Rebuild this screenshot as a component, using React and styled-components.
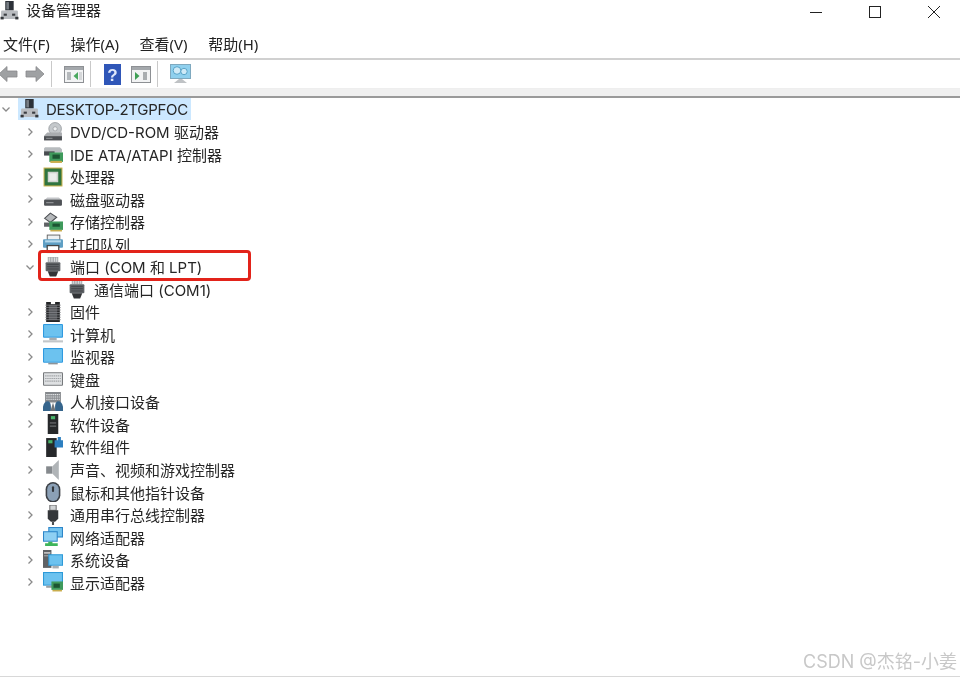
import React from 'react'
import styled, { createGlobalStyle } from 'styled-components'

const GlobalStyle = createGlobalStyle`
  html, body { margin: 0; padding: 0; background: #fff; }
  body { font-family: Inter, "Noto Sans CJK SC", sans-serif; color: #1a1a1a; }
`

const Icons = {
  app: (
    <>
      <rect x="5" y="0" width="8" height="9" fill="#2c3138" />
      <rect x="6" y="1" width="2.5" height="7" fill="#777d84" />
      <rect x="1" y="9" width="16" height="8" rx="1" fill="#b9bcc0" />
      <rect x="0.5" y="15" width="3" height="2.5" fill="#33363a" />
      <rect x="14.5" y="15" width="3" height="2.5" fill="#33363a" />
      <rect x="3.5" y="12" width="3" height="2" fill="#3a3d41" />
      <rect x="11.5" y="12" width="3" height="2" fill="#3a3d41" />
    </>
  ),
  dvd: (
    <>
      <circle cx="11.5" cy="6.5" r="6" fill="#c4c8cb" stroke="#8f9397" strokeWidth=".7" />
      <circle cx="11.5" cy="6.5" r="2" fill="#eef0f1" stroke="#8f9397" strokeWidth=".6" />
      <path d="M1 13 L4 10 H18 V17 H1 Z" fill="#a9acaf" />
      <rect x="1" y="13.5" width="17" height="4" fill="#4c4f53" />
      <rect x="3" y="15" width="6" height="1" fill="#8f9295" />
    </>
  ),
  ide: (
    <>
      <path d="M2 3 H16 L18 5 V8 H1 V4 Z" fill="#b7bbbe" />
      <rect x="1" y="7" width="10" height="4" fill="#484c50" />
      <rect x="6" y="8" width="13" height="9" fill="#3f9a5c" />
      <rect x="9" y="10" width="7" height="4" fill="#1c5532" />
      <rect x="7" y="16" width="11" height="2" fill="#c9ad4d" />
    </>
  ),
  cpu: (
    <>
      <rect x=".5" y=".5" width="18" height="18" fill="#c7b24d" />
      <rect x="1.5" y="1.5" width="16" height="16" fill="#2f7440" />
      <rect x="4.5" y="4.5" width="10" height="10" fill="#cfd3cf" />
      <rect x="6" y="6" width="7" height="7" fill="#eceeec" />
    </>
  ),
  disk: (
    <>
      <path d="M2 10 L4 8 H15 L17.5 10 Z" fill="#c4c6c9" />
      <rect x="1" y="10" width="17" height="6" rx="1" fill="#4f5256" />
      <rect x="3" y="12.5" width="7" height="1" fill="#9a9da0" />
    </>
  ),
  storage: (
    <>
      <path d="M1.5 6 L7 1 L13 5 L7 10 Z" fill="#b5b8bb" stroke="#4c4f53" strokeWidth="1" />
      <rect x="1" y="10" width="9" height="4" fill="#5f6265" />
      <rect x="6" y="9" width="13" height="8" fill="#3f9a5c" />
      <rect x="9" y="11" width="7" height="3" fill="#1c5532" />
      <rect x="7" y="17" width="11" height="1.5" fill="#c9ad4d" />
    </>
  ),
  printer: (
    <>
      <rect x="4" y="1" width="12" height="6" fill="#eef1f3" stroke="#555" strokeWidth=".8" />
      <rect x="0" y="5" width="19" height="8" rx="1" fill="#5f9fc4" />
      <rect x="2" y="6" width="15" height="2" fill="#b6d9ec" />
      <rect x="4" y="11" width="11" height="6.5" fill="#fff" stroke="#444" strokeWidth="1.2" />
    </>
  ),
  port: (
    <>
      <rect x="4.5" y="0" width="10" height="5" fill="#a7abaf" />
      <path d="M6 .5 V4.5 M8.5 .5 V4.5 M11 .5 V4.5 M13 .5 V4.5" stroke="#e8eaec" strokeWidth=".8" />
      <rect x="2.5" y="5" width="14" height="8.5" rx="1" fill="#5f6367" />
      <path d="M4 7 H15 M4 9.2 H15 M4 11.4 H15" stroke="#3f4245" strokeWidth=".8" />
      <path d="M4.5 13.5 H14.5 L12.5 18.5 H6.5 Z" fill="#313336" />
    </>
  ),
  firmware: (
    <>
      <rect x="3" y="0" width="13" height="19" fill="#232426" />
      <rect x="7.5" y="0" width="4" height="2" fill="#fff" />
      <rect x="5.5" y="3" width="8" height="14" fill="#54565a" />
      <path d="M2 3 H17 M2 5.3 H17 M2 7.6 H17 M2 9.9 H17 M2 12.2 H17 M2 14.5 H17 M2 16.8 H17" stroke="#8b8d90" strokeWidth=".7" />
    </>
  ),
  computer: (
    <>
      <rect x="0" y="0" width="19" height="13" rx="1" fill="#2f9ae0" />
      <rect x="1" y="1" width="17" height="11" fill="#6cc2ef" />
      <rect x="6" y="13" width="7" height="2.5" fill="#a8adb1" />
      <rect x="0" y="15.5" width="19" height="2" fill="#c2c6c9" />
    </>
  ),
  monitor: (
    <>
      <rect x="0" y="1" width="19" height="14" rx="1" fill="#2f9ae0" />
      <rect x="1" y="2" width="17" height="12" fill="#6cc2ef" />
      <rect x="5" y="15" width="9" height="1.5" fill="#8d9397" />
    </>
  ),
  keyboard: (
    <>
      <rect x="0" y="3" width="19" height="13" rx="1" fill="#75787b" />
      <rect x="1" y="4" width="17" height="11" fill="#dfe1e3" />
      <path d="M2 6.5 H17 M2 9 H17 M2 11.5 H17" stroke="#a2a5a8" strokeWidth="1.1" strokeDasharray="1.4 .6" />
    </>
  ),
  hid: (
    <>
      <rect x="2" y="0" width="15" height="10" fill="#85888c" />
      <path d="M3 2.5 H16 M3 4.7 H16 M3 6.9 H16" stroke="#e3e5e7" strokeWidth="1" strokeDasharray="1.4 .6" />
      <path d="M0 18 C-1 11 3 8 5.5 9 C8 10 7.5 15 7.5 18 Z" fill="#36658c" />
      <path d="M19 18 C20 11 16 8 13.5 9 C11 10 11.5 15 11.5 18 Z" fill="#36658c" />
      <path d="M7 18 L9.5 10 L12 18" fill="#70757a" />
    </>
  ),
  softdev: (
    <>
      <rect x="4.5" y="0" width="10" height="19" fill="#26282a" />
      <rect x="7.5" y="2" width="4" height="3" fill="#49b36a" />
      <rect x="6.5" y="8" width="6" height="1" fill="#77797c" />
      <rect x="6.5" y="11" width="6" height="1" fill="#77797c" />
    </>
  ),
  softcomp: (
    <>
      <rect x="3" y="1" width="10" height="18" fill="#26282a" />
      <rect x="5" y="3" width="4" height="3" fill="#49b36a" />
      <path d="M11 3 H14 V0 H17 V3 H19.5 V10 H11 Z" fill="#2d7fc0" />
    </>
  ),
  sound: (
    <>
      <rect x="3" y="6" width="6" height="7" fill="#85898d" />
      <path d="M9 6 L15 0 V19 L9 13 Z" fill="#b0b4b7" />
    </>
  ),
  mouse: (
    <>
      <rect x="2.5" y="0" width="14" height="19.5" rx="7" fill="#3c4046" />
      <rect x="4" y="1.5" width="11" height="16.5" rx="5.5" fill="#8ba0b6" />
      <rect x="8.5" y="4" width="2" height="5.5" rx="1" fill="#33373c" />
    </>
  ),
  usb: (
    <>
      <rect x="6.5" y="0" width="6" height="5" fill="#d0d3d5" stroke="#555" strokeWidth=".8" />
      <path d="M4.5 5 H14.5 V13 L11.5 16 H7.5 L4.5 13 Z" fill="#34373a" />
      <rect x="8.5" y="16" width="2" height="3" fill="#4c4f52" />
    </>
  ),
  network: (
    <>
      <rect x="5" y="0" width="14" height="10" fill="#2d86c9" />
      <rect x="6" y="1" width="12" height="8" fill="#74c4ef" />
      <rect x="0" y="4" width="14" height="10" fill="#2d86c9" />
      <rect x="1" y="5" width="12" height="8" fill="#8ed0f3" />
      <path d="M5 14 H9 V15.5 H14 V18 H2 V15.5 H5 Z" fill="#3eb45a" />
    </>
  ),
  system: (
    <>
      <rect x="0" y="0" width="8" height="17" fill="#5f6265" />
      <rect x="1" y="2" width="6" height="1.5" fill="#c8cacc" />
      <rect x="1" y="5" width="6" height="1" fill="#a8aaac" />
      <rect x="5" y="4" width="14" height="11" fill="#2d9ad8" />
      <rect x="6" y="5" width="12" height="9" fill="#6cc2ef" />
      <rect x="9" y="15" width="6" height="2.5" fill="#a8adb1" />
    </>
  ),
  display: (
    <>
      <rect x="0" y="0" width="19" height="13" fill="#2d9ad8" />
      <rect x="1" y="1" width="17" height="11" fill="#6cc2ef" />
      <rect x="3" y="13" width="8" height="2" fill="#9aa0a4" />
      <rect x="8" y="9" width="11" height="8" fill="#3f9a5c" />
      <rect x="10" y="11" width="6" height="4" fill="#1c5532" />
      <rect x="9" y="17" width="9" height="1.5" fill="#c9ad4d" />
    </>
  ),
}

const rows = [
  ['dvd', 'DVD/CD-ROM 驱动器'],
  ['ide', 'IDE ATA/ATAPI 控制器'],
  ['cpu', '处理器'],
  ['disk', '磁盘驱动器'],
  ['storage', '存储控制器'],
  ['printer', '打印队列'],
  ['port', '端口 (COM 和 LPT)', true],
  ['port', '通信端口 (COM1)', false, true],
  ['firmware', '固件'],
  ['computer', '计算机'],
  ['monitor', '监视器'],
  ['keyboard', '键盘'],
  ['hid', '人机接口设备'],
  ['softdev', '软件设备'],
  ['softcomp', '软件组件'],
  ['sound', '声音、视频和游戏控制器'],
  ['mouse', '鼠标和其他指针设备'],
  ['usb', '通用串行总线控制器'],
  ['network', '网络适配器'],
  ['system', '系统设备'],
  ['display', '显示适配器'],
]

function Icon({ name }) {
  return <IconSvg viewBox="0 0 19 19">{Icons[name]}</IconSvg>
}

function Chevron({ open, root }) {
  return (
    <ChevronBox viewBox="0 0 10 10" $root={root}>
      <path d={open ? 'M1.5 3.5 L5 7 L8.5 3.5' : 'M3.5 1.5 L7 5 L3.5 8.5'} fill="none" stroke="#8a8a8a" strokeWidth="1.3" />
    </ChevronBox>
  )
}

function WindowIcon({ arrow }) {
  return (
    <svg width="20" height="17" viewBox="0 0 20 17">
      <rect x=".5" y=".5" width="19" height="16" fill="#f2f3f4" stroke="#8d9094" />
      <rect x="1" y="1" width="18" height="3" fill="#a4a8ac" />
      {arrow === 'left' ? (
        <>
          <rect x="3" y="6" width="4" height="8" fill="#b5b9bc" />
          <path d="M14 6 L9.5 10 L14 14 Z" fill="#4aa85f" />
          <rect x="15" y="6" width="3" height="8" fill="#d5d7d9" />
        </>
      ) : (
        <>
          <path d="M4 6 L8.5 10 L4 14 Z" fill="#3f9f55" />
          <rect x="12" y="6" width="4" height="8" fill="#a9adb0" />
        </>
      )}
    </svg>
  )
}

export default function App() {
  return (
    <Page>
      <GlobalStyle />
      <TitleBar>
        <TitleIcon><Icon name="app" /></TitleIcon>
        <Title>设备管理器</Title>
        <WinButtons>
          <svg width="14" height="14" viewBox="0 0 14 14"><path d="M1 7.5 H13" stroke="#222" strokeWidth="1" /></svg>
          <svg width="14" height="14" viewBox="0 0 14 14"><rect x="1.5" y="1.5" width="11" height="11" fill="none" stroke="#222" strokeWidth="1" /></svg>
          <svg width="14" height="14" viewBox="0 0 14 14"><path d="M1 1 L13 13 M13 1 L1 13" stroke="#222" strokeWidth="1" /></svg>
        </WinButtons>
      </TitleBar>
      <MenuBar>
        <MenuItem>文件(F)</MenuItem>
        <MenuItem>操作(A)</MenuItem>
        <MenuItem>查看(V)</MenuItem>
        <MenuItem>帮助(H)</MenuItem>
      </MenuBar>
      <ToolBar>
        <ToolIcon $w={16}>
          <svg width="20" height="20" viewBox="0 0 20 20" style={{ flex: 'none' }}><path d="M1 10 L9 2.5 V7 H19 V13 H9 V17.5 Z" fill="#9fa1a3" stroke="#88898b" strokeWidth=".8" /></svg>
        </ToolIcon>
        <ToolIcon $w={20} $ml={9}>
          <svg width="20" height="20" viewBox="0 0 20 20"><path d="M19 10 L11 2.5 V7 H1 V13 H11 V17.5 Z" fill="#9fa1a3" stroke="#88898b" strokeWidth=".8" /></svg>
        </ToolIcon>
        <ToolSep />
        <ToolIcon $w={20} $ml={12}><WindowIcon arrow="left" /></ToolIcon>
        <ToolSep />
        <ToolIcon $w={17} $ml={13}>
          <svg width="17" height="21" viewBox="0 0 17 21">
            <rect width="17" height="21" fill="#2f56b8" />
            <text x="8.5" y="17" textAnchor="middle" fontSize="17" fontWeight="700" fontFamily="Liberation Sans" fill="#dfe8fb">?</text>
          </svg>
        </ToolIcon>
        <ToolIcon $w={20} $ml={10}><WindowIcon arrow="right" /></ToolIcon>
        <ToolSep />
        <ToolIcon $w={21} $ml={12}>
          <svg width="21" height="20" viewBox="0 0 21 20">
            <rect x=".5" y=".5" width="20" height="14" fill="#8fd0ee" stroke="#7fa9bf" />
            <circle cx="7" cy="6.5" r="3.8" fill="#cfeaf7" stroke="#5aa5c9" />
            <circle cx="14" cy="7.5" r="3.2" fill="#cfeaf7" stroke="#5aa5c9" />
            <path d="M9 15 L4 19 H17 L12 15 Z" fill="#bfc2c5" />
          </svg>
        </ToolIcon>
      </ToolBar>
      <Divider />
      <Tree>
        <Row $root>
          <Chevron open root />
          <RootLabel>
            <Icon name="app" />
            <RootText>DESKTOP-2TGPFOC</RootText>
          </RootLabel>
        </Row>
        {rows.map(([icon, label, open, child], i) => (
          <Row key={i} $child={child}>
            {child ? null : <Chevron open={open} />}
            <Icon name={icon} />
            <Label>{label}</Label>
          </Row>
        ))}
        <RedBox />
      </Tree>
      <Watermark>CSDN @杰铭-小姜</Watermark>
      <BottomLine />
    </Page>
  )
}

const Page = styled.div`
  position: relative;
  width: 960px;
  height: 679px;
  overflow: hidden;
  background: #fff;
  filter: blur(0.35px);
`

const TitleBar = styled.div`
  display: flex;
  align-items: center;
  height: 22px;
`

const TitleIcon = styled.div`
  display: flex;
  width: 26px;
`

const Title = styled.div`
  font-size: 15px;
  line-height: 24px;
  color: #222;
`

const WinButtons = styled.div`
  margin-left: auto;
  display: flex;
  align-items: center;
  gap: 45px;
  padding: 1px 19px 0 0;
`

const MenuBar = styled.div`
  display: flex;
  align-items: center;
  gap: 20.6px;
  height: 38px;
  padding: 7px 0 0 3px;
  box-sizing: border-box;
  border-bottom: 2px solid #d0d0d0;
  font-family: "Noto Sans", "Noto Sans CJK SC", sans-serif;
`

const MenuItem = styled.div`
  font-size: 15px;
  color: #222;
`

const ToolBar = styled.div`
  display: flex;
  align-items: center;
  height: 28px;
  border-bottom: 1px solid #eee;
`

const ToolIcon = styled.div`
  display: flex;
  align-items: center;
  justify-content: center;
  width: ${(p) => p.$w}px;
  margin-left: ${(p) => p.$ml || 0}px;
`

const ToolSep = styled.div`
  width: 1px;
  height: 26px;
  margin-left: 6px;
  background: #c9c9c9;
`

const Divider = styled.div`
  height: 7px;
  background: #f0f0f0;
  border-bottom: 2px solid #9a9a9a;
`

const Tree = styled.div`
  position: relative;
`

const Row = styled.div`
  display: flex;
  align-items: center;
  height: 22.52px;
  padding-left: ${(p) => (p.$root ? 1 : p.$child ? 67 : 25)}px;
  white-space: nowrap;
`

const ChevronBox = styled.svg`
  width: 10px;
  height: 10px;
  flex: none;
  margin-right: ${(p) => (p.$root ? 7 : 8)}px;
`

const IconSvg = styled.svg`
  width: 20px;
  height: 20px;
  flex: none;
`

const Label = styled.span`
  margin-left: 7px;
  font-size: 15px;
  color: #262626;
`

const RootLabel = styled.div`
  display: flex;
  align-items: center;
  height: 22px;
  background: #cce8ff;
  padding: 0 3px 0 2px;
`

const RootText = styled(Label)`
  margin-left: 6px;
  letter-spacing: -0.27px;
`

const RedBox = styled.div`
  position: absolute;
  left: 38px;
  top: 152px;
  width: 207px;
  height: 25px;
  border: 3px solid #e2231a;
  border-radius: 4px;
`

const Watermark = styled.div`
  position: absolute;
  right: 3px;
  bottom: 6px;
  font-size: 18px;
  color: #c8c8c8;
`

const BottomLine = styled.div`
  position: absolute;
  left: 0;
  right: 0;
  bottom: 2px;
  height: 1px;
  background: #d8d8d8;
`
